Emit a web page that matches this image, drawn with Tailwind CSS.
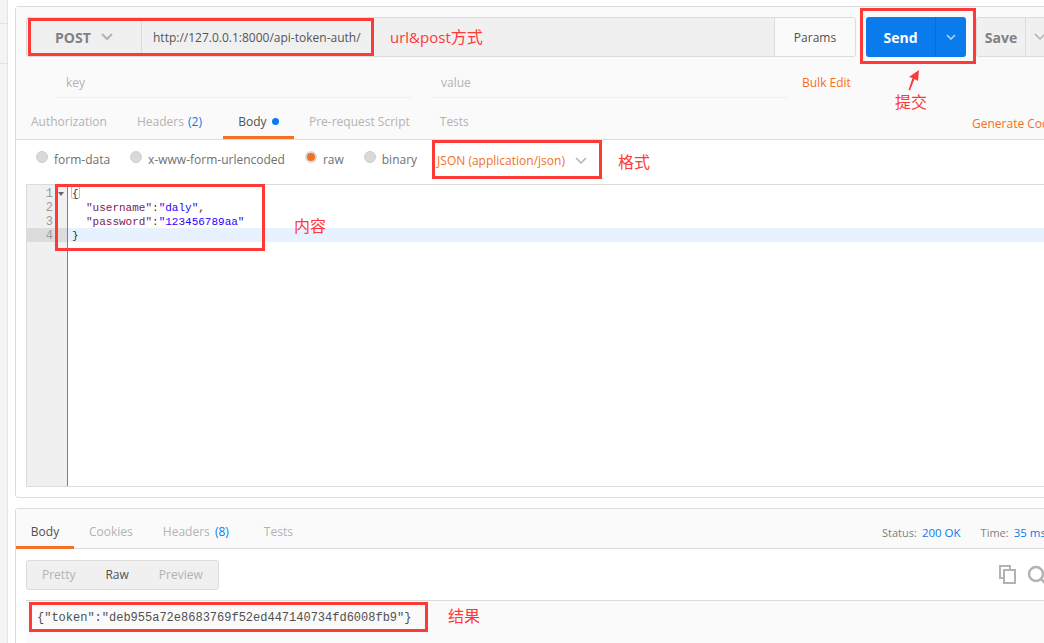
<!DOCTYPE html>
<html>
<head>
<meta charset="utf-8">
<script src="https://cdn.jsdelivr.net/npm/@tailwindcss/browser@4"></script>
</head>
<body class="bg-white">
<div class="relative w-[1044px] h-[643px] overflow-hidden bg-white font-['Open_Sans','Noto_Sans_CJK_SC',sans-serif] text-[12px] text-[#808080]">

    <!-- Sidebar edge -->
    <div class="absolute left-0 top-0 bottom-0 w-[8px] bg-[#f4f4f4] border-r border-[#e3e3e3]">
        <div class="h-[24px] border-b border-[#e3e3e3]"></div>
        <div class="h-[40px] border-b border-[#e3e3e3]"></div>
    </div>

    <div class="pl-[15px] pt-[6px] flex flex-col gap-[10px]">
        <!-- Request panel -->
        <div class="w-[1040px] h-[492px] border border-[#dcdcdc] rounded-[3px] flex flex-col">
            <div class="h-[133px] bg-[#fafafa] border-b border-[#dcdcdc] shrink-0">
                <!-- URL bar -->
                <div class="flex items-start pl-[10px] pt-[10px]">
                    <div class="flex h-[40px] w-[830px] shrink-0 border border-[#dcdcdc] rounded-[3px] bg-[#f0f0f0]">
                        <div class="w-[115px] flex items-center pl-[28px] gap-[10px] border-r border-[#dcdcdc]">
                            <span class="text-[14px] font-bold text-[#808080]">POST</span>
                            <svg width="12" height="8" viewBox="0 0 12 8" fill="none" stroke="#b3b3b3" stroke-width="2"><path d="M1 1l5 5 5-5"/></svg>
                        </div>
                        <div class="flex-1 flex items-center pl-[11px] pt-[2px] text-[#555555]">http://127.0.0.1:8000/api-token-auth/</div>
                        <div class="w-[81px] flex items-center justify-center pt-[2px] bg-[#fafafa] border-l border-[#dcdcdc] rounded-r-[3px] text-[#505050]">Params</div>
                    </div>
                    <div class="ml-[10px] flex h-[40px] w-[100px] shrink-0 rounded-[3px] bg-[#097bed] text-white">
                        <div class="w-[69px] flex items-center justify-center text-[14px] font-bold">Send</div>
                        <div class="flex-1 flex items-center justify-center border-l border-[#0a6bc9]">
                            <svg width="10" height="6" viewBox="0 0 10 6" fill="none" stroke="#b9d4ee" stroke-width="1.5"><path d="M1 1l4 4 4-4"/></svg>
                        </div>
                    </div>
                    <div class="ml-[10px] flex h-[40px] w-[90px] shrink-0 border border-[#dcdcdc] rounded-[3px] bg-[#f0f0f0]">
                        <div class="w-[48px] flex items-center justify-center text-[14px] font-bold text-[#808080]">Save</div>
                        <div class="flex-1 flex items-center pl-[8px] border-l border-[#dcdcdc]">
                            <svg width="12" height="8" viewBox="0 0 12 8" fill="none" stroke="#b3b3b3" stroke-width="1.5"><path d="M1 1l5 5 5-5"/></svg>
                        </div>
                    </div>
                </div>
                <!-- Key value row -->
                <div class="flex items-start pl-[40px] h-[47px] pt-[14px]">
                    <div class="w-[355px] h-[27px] border-b border-[#eeeeee] pl-[10px] pt-[3px] text-[#b3b3b3]">key</div>
                    <div class="ml-[21px] w-[355px] h-[27px] border-b border-[#eeeeee] pl-[9px] pt-[3px] text-[#b3b3b3]">value</div>
                    <div class="ml-[15px] pt-[3px] text-[#f47023]">Bulk Edit</div>
                </div>
                <!-- Request tabs -->
                <div class="flex items-start pl-[15px] h-[35px] relative">
                    <div class="pt-[9px] text-[#b3b3b3]">Authorization</div>
                    <div class="ml-[30px] pt-[9px] text-[#b3b3b3]">Headers <span class="ml-[1px] text-[#097bed]">(2)</span></div>
                    <div class="ml-[21px] w-[71px] h-[35px] pt-[9px] flex justify-center gap-[5px] border-b-[3px] border-[#f47023] text-[#505050]">Body <span class="mt-[5px] w-[7px] h-[7px] rounded-full bg-[#097bed]"></span></div>
                    <div class="ml-[15px] pt-[9px] text-[#b3b3b3]">Pre-request Script</div>
                    <div class="ml-[30px] pt-[9px] text-[#b3b3b3]">Tests</div>
                    <div class="absolute left-[956px] top-[11px] whitespace-nowrap text-[#f47023]">Generate Code</div>
                </div>
            </div>
            <!-- Body type options -->
            <div class="h-[44px] flex items-center pl-[20px] shrink-0 pb-[2px]">
                <span class="mb-[8px] w-[12px] h-[12px] rounded-full bg-[#d9d9d9] border border-[#cfcfcf]"></span>
                <span class="ml-[6px] mb-[2px] text-[#707070]">form-data</span>
                <span class="ml-[20px] mb-[8px] w-[12px] h-[12px] rounded-full bg-[#d9d9d9] border border-[#cfcfcf]"></span>
                <span class="ml-[6px] mb-[2px] text-[#707070]">x-www-form-urlencoded</span>
                <span class="ml-[20px] mb-[8px] w-[12px] h-[12px] rounded-full bg-[#f47023] border-[2px] border-[#d9d9d9]"></span>
                <span class="ml-[6px] mb-[2px] text-[#707070]">raw</span>
                <span class="ml-[20px] mb-[8px] w-[12px] h-[12px] rounded-full bg-[#d9d9d9] border border-[#cfcfcf]"></span>
                <span class="ml-[6px] mb-[2px] text-[#707070]">binary</span>
                <span class="ml-[20px] text-[#f47023]">JSON (application/json)</span>
                <svg class="ml-[10px]" width="12" height="8" viewBox="0 0 12 8" fill="none" stroke="#b3b3b3" stroke-width="1.5"><path d="M1 1l5 5 5-5"/></svg>
            </div>
            <!-- Editor -->
            <div class="ml-[10px] flex h-[303px] border border-[#dcdcdc] border-r-0 font-['Liberation_Mono',monospace] text-[11px] leading-[16px]">
                <div class="w-[41px] bg-[#f0f0f0] border-r border-[#808080] pt-[1px] text-right text-[12px] text-[#999999] shrink-0">
                    <div class="relative h-[14px] pr-[14px]">1<span class="absolute left-[31px] top-[6px] w-0 h-0 border-x-[3px] border-x-transparent border-t-[4px] border-t-[#666666]"></span></div>
                    <div class="h-[14px] pr-[14px]">2</div>
                    <div class="h-[14px] pr-[14px]">3</div>
                    <div class="h-[14px] pr-[14px] bg-[#dcdcdc]">4</div>
                </div>
                <div class="flex-1 pt-[1px] text-[#333333]">
                    <div class="h-[14px] pl-[4px]"><span class="inline-block h-[13px] leading-[14px] border border-[#c4c4c4] rounded-[2px] -ml-[1px]">{</span></div>
                    <div class="h-[14px] pl-[18px] whitespace-pre"><span class="text-[#7a1a5c]">"username"</span>:<span class="text-[#2a00ff]">"daly"</span>,</div>
                    <div class="h-[14px] pl-[18px] whitespace-pre"><span class="text-[#7a1a5c]">"password"</span>:<span class="text-[#2a00ff]">"123456789aa"</span></div>
                    <div class="h-[14px] pl-[4px] bg-[#e8f2fe]">}</div>
                </div>
            </div>
        </div>

        <!-- Response panel -->
        <div class="w-[1040px] h-[140px] border border-[#dcdcdc] rounded-[3px] flex flex-col">
            <div class="h-[40px] bg-[#fafafa] border-b border-[#dcdcdc] flex items-start shrink-0 relative">
                <div class="w-[58px] h-[40px] pt-[14px] text-center border-b-[3px] border-[#f47023] text-[#505050]">Body</div>
                <div class="ml-[15px] pt-[14px] text-[#b3b3b3]">Cookies</div>
                <div class="ml-[30px] pt-[14px] text-[#b3b3b3]">Headers <span class="ml-[2px] text-[#097bed]">(8)</span></div>
                <div class="ml-[35px] pt-[14px] text-[#b3b3b3]">Tests</div>
                <div class="absolute left-[866px] top-[15px] flex items-baseline whitespace-nowrap text-[11px]">
                    <span class="text-[#808080]">Status:</span><span class="ml-[5px] text-[11.5px] text-[#097bed]">200 OK</span>
                    <span class="ml-[20px] text-[#808080]">Time:</span><span class="ml-[5px] text-[11.5px] text-[#097bed]">35 ms</span>
                </div>
            </div>
            <div class="h-[51px] flex items-center pl-[10px] pt-[1px] shrink-0 relative">
                <div class="w-[193px] h-[30px] flex items-center bg-[#f0f0f0] border border-[#dcdcdc] rounded-[3px]">
                    <span class="ml-[15px] text-[#b3b3b3]">Pretty</span>
                    <span class="ml-[30px] text-[#505050]">Raw</span>
                    <span class="ml-[30px] text-[#b3b3b3]">Preview</span>
                </div>
                <svg class="absolute left-[983px] top-[16px]" width="18" height="19" viewBox="0 0 18 19" fill="none" stroke="#b3b3b3" stroke-width="2"><path d="M4 13H1V1h10v3"/><rect x="5" y="5" width="11" height="13"/></svg>
                <svg class="absolute left-[1011px] top-[16px]" width="22" height="20" viewBox="0 0 22 20" fill="none" stroke="#b3b3b3" stroke-width="2.5"><circle cx="9" cy="9" r="7"/><path d="M14 14l6 6"/></svg>
            </div>
            <div class="flex-1 ml-[10px] bg-[#fafafa] border-t border-[#dcdcdc] pl-[11px] pt-[8px] font-['Liberation_Mono',monospace] text-[12px] text-[#505050]">{"token":"deb955a72e8683769f52ed447140734fd6008fb9"}</div>
        </div>
    </div>

    <!-- Annotations drawn on top of the screenshot -->
    <div class="absolute left-[28px] top-[18px] w-[346px] h-[38px] border-[3px] border-[#ff3838]"></div>
    <div class="absolute left-[860px] top-[8px] w-[116px] h-[56px] border-[3px] border-[#ff3838]"></div>
    <div class="absolute left-[432px] top-[140px] w-[170px] h-[39px] border-[3px] border-[#ff3838]"></div>
    <div class="absolute left-[55px] top-[184px] w-[210px] h-[67px] border-[3px] border-[#ff3838]"></div>
    <div class="absolute left-[29px] top-[602px] w-[399px] h-[30px] border-[3px] border-[#ff3838]"></div>

    <span class="absolute left-[390px] top-[26px] text-[16px] leading-[22px] text-[#ff3838]"><span class="text-[15px]">url&amp;post</span>方式</span>
    <span class="absolute left-[895px] top-[91px] text-[16px] leading-[22px] text-[#ff3838]">提交</span>
    <span class="absolute left-[618px] top-[151px] text-[16px] leading-[22px] text-[#ff3838]">格式</span>
    <span class="absolute left-[294px] top-[215px] text-[16px] leading-[22px] text-[#ff3838]">内容</span>
    <span class="absolute left-[448px] top-[605px] text-[16px] leading-[22px] text-[#ff3838]">结果</span>
    <svg class="absolute left-[907px] top-[69px]" width="14" height="22" viewBox="0 0 14 22" fill="#ff3838"><path d="M12 1 2 8l3.500 1L1.500 21l1.500.5L7.500 10l3.500 2z"/></svg>
</div>
</body>
</html>
